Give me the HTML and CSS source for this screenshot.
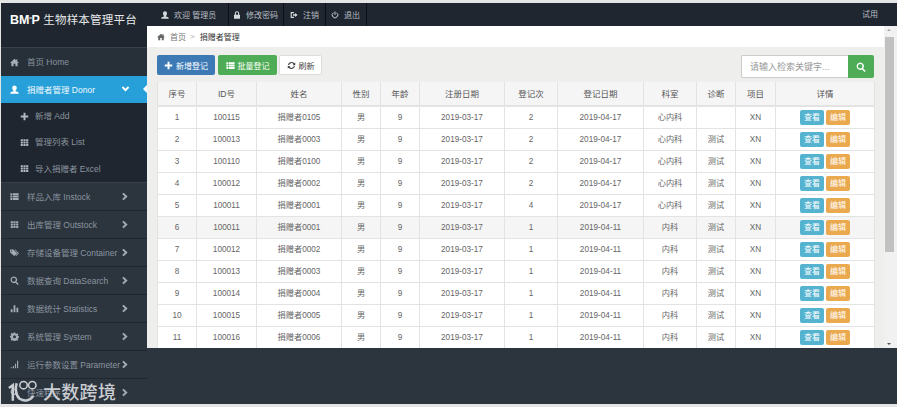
FILE: index.html
```html
<!DOCTYPE html>
<html>
<head>
    <meta charset="utf-8">
    <link rel="stylesheet" href="styles.css">
</head>
<body>
    <svg class="icon-defs" width="0" height="0">
        <symbol id="i-home" viewBox="0 0 12 12"><path d="M6 1 0 6.500h1.800V11h3V7.500h2.400V11h3V6.500H12L9.800 4.500V1.500H8.400v1.700z"/></symbol>
        <symbol id="i-user" viewBox="0 0 12 12"><path d="M6 .5c1.900 0 3 1.400 3 3.200S8 7 7.400 7.400v.9c1.800.5 4.100 1 4.100 2.200v1h-11v-1c0-1.200 2.300-1.700 4.100-2.200v-.9C4 7 3 5.500 3 3.700S4.100.5 6 .5z"/></symbol>
        <symbol id="i-plus" viewBox="0 0 12 12"><path d="M4.700 1h2.600v3.700H11v2.600H7.300V11H4.700V7.300H1V4.700h3.700z"/></symbol>
        <symbol id="i-th" viewBox="0 0 12 12"><path d="M1 1.500h2.800v2.400H1zM4.600 1.500h2.800v2.400H4.600zM8.200 1.500H11v2.400H8.200zM1 4.800h2.800v2.400H1zM4.600 4.800h2.800v2.400H4.600zM8.200 4.800H11v2.400H8.200zM1 8.100h2.800v2.400H1zM4.600 8.100h2.800v2.400H4.600zM8.200 8.100H11v2.400H8.200z"/></symbol>
        <symbol id="i-list" viewBox="0 0 12 12"><path d="M.5 1.500h2.500v2.400H.5zM3.800 1.500h7.700v2.400H3.800zM.5 4.800h2.500v2.400H.5zM3.800 4.800h7.700v2.400H3.800zM.5 8.100h2.500v2.400H.5zM3.800 8.100h7.700v2.400H3.800z"/></symbol>
        <symbol id="i-tags" viewBox="0 0 12 12"><path d="M0 2h4.500l5 5-3.800 3.800-5.700-5zM2 3.200a.9.900 0 1 0 0 1.800.9.900 0 0 0 0-1.800zM6 2h1l5 5-3.800 3.800-.8-.8 3-3z"/></symbol>
        <symbol id="i-search" viewBox="0 0 12 12"><path fill-rule="evenodd" d="M5 .5a4.500 4.500 0 0 1 3.600 7.200l3 3-1.300 1.300-3-3A4.500 4.500 0 1 1 5 .5zm0 1.800a2.700 2.700 0 1 0 0 5.400 2.700 2.700 0 0 0 0-5.400z"/></symbol>
        <symbol id="i-stats" viewBox="0 0 12 12"><path d="M1 7h2.400v4H1zM4.800 1.500h2.400V11H4.800zM8.600 5H11v6H8.600z"/></symbol>
        <symbol id="i-cog" viewBox="0 0 12 12"><path fill-rule="evenodd" d="M5 .5h2l.3 1.600 1 .4 1.400-.9 1.400 1.400-.9 1.400.4 1 1.600.3v2l-1.600.3-.4 1 .9 1.400-1.400 1.400-1.400-.9-1 .4-.3 1.600H5l-.3-1.600-1-.4-1.400.9L.9 9.900l.9-1.400-.4-1L-.2 7.200v-2l1.600-.3.4-1-.9-1.400 1.400-1.400 1.400.9 1-.4zM6 4.200a2 2 0 1 0 0 4 2 2 0 0 0 0-4z"/></symbol>
        <symbol id="i-signal" viewBox="0 0 12 12"><path d="M1 9.500h1.500V11H1zM3.800 8h1.500v3H3.800zM6.600 5h1.500v6H6.600zM9.400 1h1.500v10H9.400z"/></symbol>
        <symbol id="i-lock" viewBox="0 0 12 12"><path fill-rule="evenodd" d="M6 .5c2 0 3.200 1.300 3.200 3.200V5.500H10.500V11.500H1.500V5.500H2.800V3.700C2.800 1.800 4 .5 6 .5zm0 1.500c-1 0-1.600.7-1.600 1.700V5.500h3.200V3.700C7.600 2.700 7 2 6 2z"/></symbol>
        <symbol id="i-logout" viewBox="0 0 12 12"><path d="M1 1.500h5v1.700H2.700v5.600H6v1.700H1zM7.500 3l4 3-4 3V7H4.500V5h3z"/></symbol>
        <symbol id="i-power" viewBox="0 0 12 12"><path fill="none" stroke="currentColor" stroke-width="1.400" d="M6 .8v5M3.600 2.600a4.200 4.200 0 1 0 4.800 0"/></symbol>
        <symbol id="i-refresh" viewBox="0 0 12 12"><path d="M6 1.200a4.800 4.800 0 0 1 3.800 1.900L11 2v3.500H7.500l1.200-1.200A3.300 3.300 0 0 0 2.800 5.200H1.300A4.800 4.800 0 0 1 6 1.200zM1 6.500h3.500L3.300 7.700a3.300 3.300 0 0 0 5.900-.9h1.500A4.800 4.800 0 0 1 2.200 8.900L1 10z"/></symbol>
        <symbol id="i-right" viewBox="0 0 12 12"><path d="M3.500 1 8.800 6l-5.300 5L1.600 9.200 5.100 6 1.600 2.800z"/></symbol>
        <symbol id="i-down" viewBox="0 0 12 12"><path d="M1 3.500 6 8.800l5-5.300-1.800-1.900L6 5.100 2.800 1.600z"/></symbol>
    </svg>

    <div class="app">
        <aside class="sidebar">
            <div class="brand"><span class="brand-mark">BM<sup>o</sup>P</span> 生物样本管理平台</div>
            <ul class="menu">
                <li class="menu-item menu-home"><svg class="ico"><use href="#i-home"/></svg><span>首页 Home</span></li>
                <li class="menu-item active"><svg class="ico"><use href="#i-user"/></svg><span>捐赠者管理 Donor</span><svg class="arrow"><use href="#i-down"/></svg></li>
                <li class="submenu">
                    <div class="sub-item"><svg class="ico"><use href="#i-plus"/></svg><span>新增 Add</span></div>
                    <div class="sub-item"><svg class="ico"><use href="#i-th"/></svg><span>管理列表 List</span></div>
                    <div class="sub-item"><svg class="ico"><use href="#i-th"/></svg><span>导入捐赠者 Excel</span></div>
                </li>
                <li class="menu-item"><svg class="ico"><use href="#i-list"/></svg><span>样品入库 Instock</span><svg class="arrow"><use href="#i-right"/></svg></li>
                <li class="menu-item"><svg class="ico"><use href="#i-th"/></svg><span>出库管理 Outstock</span><svg class="arrow"><use href="#i-right"/></svg></li>
                <li class="menu-item"><svg class="ico"><use href="#i-tags"/></svg><span>存储设备管理 Container</span><svg class="arrow"><use href="#i-right"/></svg></li>
                <li class="menu-item"><svg class="ico"><use href="#i-search"/></svg><span>数据查询 DataSearch</span><svg class="arrow"><use href="#i-right"/></svg></li>
                <li class="menu-item"><svg class="ico"><use href="#i-stats"/></svg><span>数据统计 Statistics</span><svg class="arrow"><use href="#i-right"/></svg></li>
                <li class="menu-item"><svg class="ico"><use href="#i-cog"/></svg><span>系统管理 System</span><svg class="arrow"><use href="#i-right"/></svg></li>
                <li class="menu-item"><svg class="ico"><use href="#i-signal"/></svg><span>运行参数设置 Parameter</span><svg class="arrow"><use href="#i-right"/></svg></li>
                <li class="menu-item menu-last"><svg class="ico"><use href="#i-search"/></svg><span>快速程序</span><svg class="arrow"><use href="#i-right"/></svg></li>
            </ul>
            <div class="watermark">
                <svg class="wm-logo" viewBox="0 0 38 24"><path fill="none" stroke="currentColor" stroke-width="2.600" d="M3 9 7 6v16"/><path fill="none" stroke="currentColor" stroke-width="2.600" d="M11 4c-1.500 4-1.500 12 3 16 5 3 11 2 14-3"/><circle cx="18" cy="6" r="3.800" fill="none" stroke="currentColor" stroke-width="1.600"/><circle cx="27" cy="6" r="3.800" fill="none" stroke="currentColor" stroke-width="1.600"/></svg>
                <span class="wm-text">大数跨境</span>
            </div>
        </aside>

        <div class="main">
            <header class="topbar">
                <a class="top-link top-welcome"><svg class="ico-sm"><use href="#i-user"/></svg>欢迎 管理员</a>
                <a class="top-link top-pass"><svg class="ico-sm"><use href="#i-lock"/></svg>修改密码</a>
                <a class="top-link top-logoff"><svg class="ico-sm"><use href="#i-logout"/></svg>注销</a>
                <a class="top-link top-exit"><svg class="ico-sm"><use href="#i-power"/></svg>退出</a>
                <span class="top-trial">试用</span>
            </header>

            <div class="workspace">
                <div class="page">
                    <div class="crumbs"><svg class="ico-crumb"><use href="#i-home"/></svg>首页<i>&gt;</i><b>捐赠者管理</b></div>
                    <div class="content">
                        <div class="toolbar">
                            <button class="btn btn-blue"><svg class="ico-btn"><use href="#i-plus"/></svg>新增登记</button>
                            <button class="btn btn-green"><svg class="ico-btn"><use href="#i-list"/></svg>批量登记</button>
                            <button class="btn btn-white"><svg class="ico-btn"><use href="#i-refresh"/></svg>刷新</button>
                            <div class="search">
                                <input type="text" placeholder="请输入检索关键字...">
                                <button class="search-btn"><svg class="ico-search"><use href="#i-search"/></svg></button>
                            </div>
                        </div>
                        <table class="grid">
                            <colgroup>
                                <col class="c1"><col class="c2"><col class="c3"><col class="c4"><col class="c5"><col class="c6"><col class="c7"><col class="c8"><col class="c9"><col class="c10"><col class="c11"><col class="c12">
                            </colgroup>
                            <thead>
                                <tr><th>序号</th><th>ID号</th><th>姓名</th><th>性别</th><th>年龄</th><th>注册日期</th><th>登记次</th><th>登记日期</th><th>科室</th><th>诊断</th><th>项目</th><th>详情</th></tr>
                            </thead>
                            <tbody>
                                <tr><td>1</td><td>100115</td><td>捐赠者0105</td><td>男</td><td>9</td><td>2019-03-17</td><td>2</td><td>2019-04-17</td><td>心内科</td><td></td><td>XN</td><td><a class="tag tag-info">查看</a><a class="tag tag-warn">编辑</a></td></tr>
                                <tr><td>2</td><td>100013</td><td>捐赠者0003</td><td>男</td><td>9</td><td>2019-03-17</td><td>2</td><td>2019-04-17</td><td>心内科</td><td>测试</td><td>XN</td><td><a class="tag tag-info">查看</a><a class="tag tag-warn">编辑</a></td></tr>
                                <tr><td>3</td><td>100110</td><td>捐赠者0100</td><td>男</td><td>9</td><td>2019-03-17</td><td>2</td><td>2019-04-17</td><td>心内科</td><td>测试</td><td>XN</td><td><a class="tag tag-info">查看</a><a class="tag tag-warn">编辑</a></td></tr>
                                <tr><td>4</td><td>100012</td><td>捐赠者0002</td><td>男</td><td>9</td><td>2019-03-17</td><td>2</td><td>2019-04-17</td><td>心内科</td><td>测试</td><td>XN</td><td><a class="tag tag-info">查看</a><a class="tag tag-warn">编辑</a></td></tr>
                                <tr><td>5</td><td>100011</td><td>捐赠者0001</td><td>男</td><td>9</td><td>2019-03-17</td><td>4</td><td>2019-04-17</td><td>心内科</td><td>测试</td><td>XN</td><td><a class="tag tag-info">查看</a><a class="tag tag-warn">编辑</a></td></tr>
                                <tr class="hover"><td>6</td><td>100011</td><td>捐赠者0001</td><td>男</td><td>9</td><td>2019-03-17</td><td>1</td><td>2019-04-11</td><td>内科</td><td>测试</td><td>XN</td><td><a class="tag tag-info">查看</a><a class="tag tag-warn">编辑</a></td></tr>
                                <tr><td>7</td><td>100012</td><td>捐赠者0002</td><td>男</td><td>9</td><td>2019-03-17</td><td>1</td><td>2019-04-11</td><td>内科</td><td>测试</td><td>XN</td><td><a class="tag tag-info">查看</a><a class="tag tag-warn">编辑</a></td></tr>
                                <tr><td>8</td><td>100013</td><td>捐赠者0003</td><td>男</td><td>9</td><td>2019-03-17</td><td>1</td><td>2019-04-11</td><td>内科</td><td>测试</td><td>XN</td><td><a class="tag tag-info">查看</a><a class="tag tag-warn">编辑</a></td></tr>
                                <tr><td>9</td><td>100014</td><td>捐赠者0004</td><td>男</td><td>9</td><td>2019-03-17</td><td>1</td><td>2019-04-11</td><td>内科</td><td>测试</td><td>XN</td><td><a class="tag tag-info">查看</a><a class="tag tag-warn">编辑</a></td></tr>
                                <tr><td>10</td><td>100015</td><td>捐赠者0005</td><td>男</td><td>9</td><td>2019-03-17</td><td>1</td><td>2019-04-11</td><td>内科</td><td>测试</td><td>XN</td><td><a class="tag tag-info">查看</a><a class="tag tag-warn">编辑</a></td></tr>
                                <tr><td>11</td><td>100016</td><td>捐赠者0006</td><td>男</td><td>9</td><td>2019-03-17</td><td>1</td><td>2019-04-11</td><td>内科</td><td>测试</td><td>XN</td><td><a class="tag tag-info">查看</a><a class="tag tag-warn">编辑</a></td></tr>
                            </tbody>
                        </table>
                    </div>
                </div>
                <div class="scrollbar">
                    <span class="scroll-up"></span>
                    <span class="scroll-thumb"></span>
                    <span class="scroll-down"></span>
                </div>
            </div>

            <footer class="footer"></footer>
        </div>
    </div>
</body>
</html>
```

FILE: styles.css
```css
html, body {
    margin: 0;
    height: 100%;
}

body {
    background: #e4e4e4;
    font-family: "Liberation Sans", "Noto Sans CJK SC", sans-serif;
    font-size: 8px;
    color: #555;
    overflow: hidden;
}

.icon-defs {
    position: absolute;
}

svg {
    fill: currentColor;
}

.app {
    display: flex;
    height: 401px;
    margin: 3px 0 0 1px;
}

/* sidebar */
.sidebar {
    position: relative;
    width: 146px;
    flex: none;
    background: #2c343e;
    overflow: hidden;
}

.brand {
    height: 44px;
    box-sizing: border-box;
    padding: 8px 0 0 9px;
    background: #1f262f;
    color: #e6e8ea;
    font-size: 11.500px;
    line-height: 18px;
    letter-spacing: 0.2px;
    white-space: nowrap;
}

.brand-mark {
    font-weight: bold;
    font-size: 12.500px;
    color: #fff;
    letter-spacing: -0.1px;
}

.brand-mark sup {
    font-size: 4px;
    line-height: 0;
    vertical-align: 5px;
}

.menu {
    list-style: none;
    margin: 0;
    padding: 0;
}

.menu-item {
    position: relative;
    display: flex;
    align-items: center;
    height: 27px;
    border-bottom: 1px solid #1f262f;
    color: #8a949e;
    font-size: 8.500px;
    line-height: 12px;
    white-space: nowrap;
}

.menu-home {
    box-sizing: border-box;
    height: 29px;
    background: #272f39;
    border-top: 1px solid #38424c;
    border-bottom: 0;
}

.menu-item .ico {
    width: 9px;
    height: 9px;
    margin: 0 8px 0 9px;
    flex: none;
    color: #a3adb6;
}

.menu-item .arrow {
    position: absolute;
    left: 120px;
    top: 9px;
    width: 9px;
    height: 9px;
    color: #a3adb6;
}

.menu-item.active {
    box-sizing: border-box;
    background: #27a0da;
    border-bottom: 0;
    color: #f2f8fc;
}

.menu-item.active .ico,
.menu-item.active .arrow {
    color: #fff;
}

.menu-item.active::after {
    content: "";
    position: absolute;
    right: 0;
    top: 9px;
    border: 4px solid transparent;
    border-right-color: #fff;
    border-left-width: 0;
}

.submenu {
    height: 79px;
    background: #1f262f;
    border-bottom: 1px solid #38424c;
    display: flex;
    flex-direction: column;
}

.sub-item {
    display: flex;
    align-items: center;
    height: 26.500px;
    color: #8a949e;
    font-size: 8.500px;
    line-height: 12px;
    white-space: nowrap;
}

.sub-item .ico {
    width: 9px;
    height: 9px;
    margin: 0 6px 0 19px;
    color: #b0b8c0;
}

.watermark {
    position: absolute;
    left: 5px;
    top: 376px;
    display: flex;
    align-items: center;
    color: #c9cdd1;
    pointer-events: none;
}

.wm-logo {
    width: 37px;
    height: 24px;
}

.wm-text {
    font-family: "Noto Sans CJK SC", sans-serif;
    font-size: 18px;
    font-weight: 500;
    line-height: 24px;
    letter-spacing: 0.3px;
}

/* top bar */
.main {
    flex: 1;
    min-width: 0;
    display: flex;
    flex-direction: column;
}

.topbar {
    display: flex;
    height: 23px;
    flex: none;
    background: #1f262f;
    color: #b8bec4;
    font-size: 8px;
}

.top-link {
    display: flex;
    align-items: center;
    box-sizing: border-box;
    padding-left: 14px;
    border-right: 1px solid #0b0e12;
    white-space: nowrap;
}

.top-welcome { width: 82px; }
.top-pass { width: 55px; padding-left: 4px; }
.top-logoff { width: 42px; padding-left: 6px; }
.top-exit { width: 41px; padding-left: 5px; }

.ico-sm {
    width: 8px;
    height: 8px;
    margin-right: 5px;
    color: #d5d9dc;
}

.top-trial {
    margin-left: auto;
    margin-right: 19px;
    line-height: 23px;
}

/* page */
.workspace {
    flex: 1;
    min-height: 0;
    display: flex;
}

.page {
    flex: 1;
    min-width: 0;
    display: flex;
    flex-direction: column;
}

.crumbs {
    height: 21px;
    flex: none;
    display: flex;
    align-items: center;
    padding-left: 10px;
    background: #fff;
    color: #777;
}

.crumbs i {
    font-style: normal;
    margin: 0 5px 0 4px;
    color: #aaa;
}

.crumbs b {
    font-weight: normal;
    color: #333;
}

.ico-crumb {
    width: 8px;
    height: 8px;
    margin-right: 5px;
    color: #666;
}

.content {
    flex: 1;
    min-height: 0;
    overflow: hidden;
    box-sizing: border-box;
    padding: 8px 10px 0;
    background: #eeeeec;
}

.toolbar {
    display: flex;
    align-items: flex-start;
    height: 27px;
}

.btn {
    display: flex;
    align-items: center;
    justify-content: center;
    box-sizing: border-box;
    height: 20px;
    padding: 0;
    margin-right: 3px;
    border: 1px solid transparent;
    border-radius: 2px;
    font-family: inherit;
    font-size: 8px;
    color: #fff;
}

.btn-blue { width: 58px; background: #3d7ab5; }
.btn-green { width: 59px; margin-right: 2px; background: #4dac55; }
.btn-white { width: 43px; background: #fff; border-color: #ddd; color: #444; }

.ico-btn {
    width: 9px;
    height: 9px;
    margin-right: 3px;
}

.search {
    display: flex;
    margin-left: auto;
    height: 23px;
}

.search input {
    width: 107px;
    box-sizing: border-box;
    padding: 0 8px;
    border: 1px solid #ccc;
    border-right: 0;
    border-radius: 2px 0 0 2px;
    font-family: inherit;
    font-size: 9px;
    background: #fff;
}

.search input::placeholder {
    color: #999;
}

.search-btn {
    width: 26px;
    padding: 0;
    border: 0;
    border-radius: 0 2px 2px 0;
    background: #4dac55;
    color: #fff;
}

.ico-search {
    display: block;
    width: 10px;
    height: 10px;
    margin: 0 auto;
}

/* table */
.grid {
    width: 717px;
    table-layout: fixed;
    border-collapse: collapse;
    background: #fff;
    color: #666;
}

.c1 { width: 39px; }
.c2 { width: 60px; }
.c3 { width: 85px; }
.c4 { width: 39px; }
.c5 { width: 39px; }
.c6 { width: 85px; }
.c7 { width: 53px; }
.c8 { width: 86px; }
.c9 { width: 53px; }
.c10 { width: 39px; }
.c11 { width: 40px; }
.c12 { width: 99px; }

.grid th,
.grid td {
    padding: 0;
    border: 1px solid #e3e3e3;
    border-top: 0;
    text-align: center;
    line-height: 12px;
    white-space: nowrap;
}

.grid th {
    height: 23px;
    background: #f5f5f5;
    border-bottom: 2px solid #e3e3e3;
    font-weight: normal;
    font-size: 8.500px;
    color: #555;
}

.grid td {
    height: 21px;
    font-size: 8.200px;
}

.grid .hover td {
    background: #f5f5f5;
}

.tag {
    display: inline-block;
    width: 24px;
    height: 15px;
    line-height: 15px;
    border-radius: 2px;
    color: #fff;
    font-size: 8px;
    vertical-align: middle;
}

.tag-info { background: #55b3d0; margin-right: 2px; }
.tag-warn { background: #eaa94e; }

/* scrollbar */
.scrollbar {
    position: relative;
    width: 13px;
    flex: none;
    background: #f1f1f1;
}

.scroll-thumb {
    position: absolute;
    left: 1px;
    right: 3px;
    top: 11px;
    height: 215px;
    background: #c1c1c1;
}

.scroll-up,
.scroll-down {
    position: absolute;
    left: 3px;
    border: 2.500px solid transparent;
}

.scroll-up {
    top: 1px;
    border-bottom-color: #a3a3a3;
}

.scroll-down {
    bottom: 1px;
    border-top-color: #505050;
}

.footer {
    height: 56px;
    flex: none;
    background: #2c343e;
}
```
